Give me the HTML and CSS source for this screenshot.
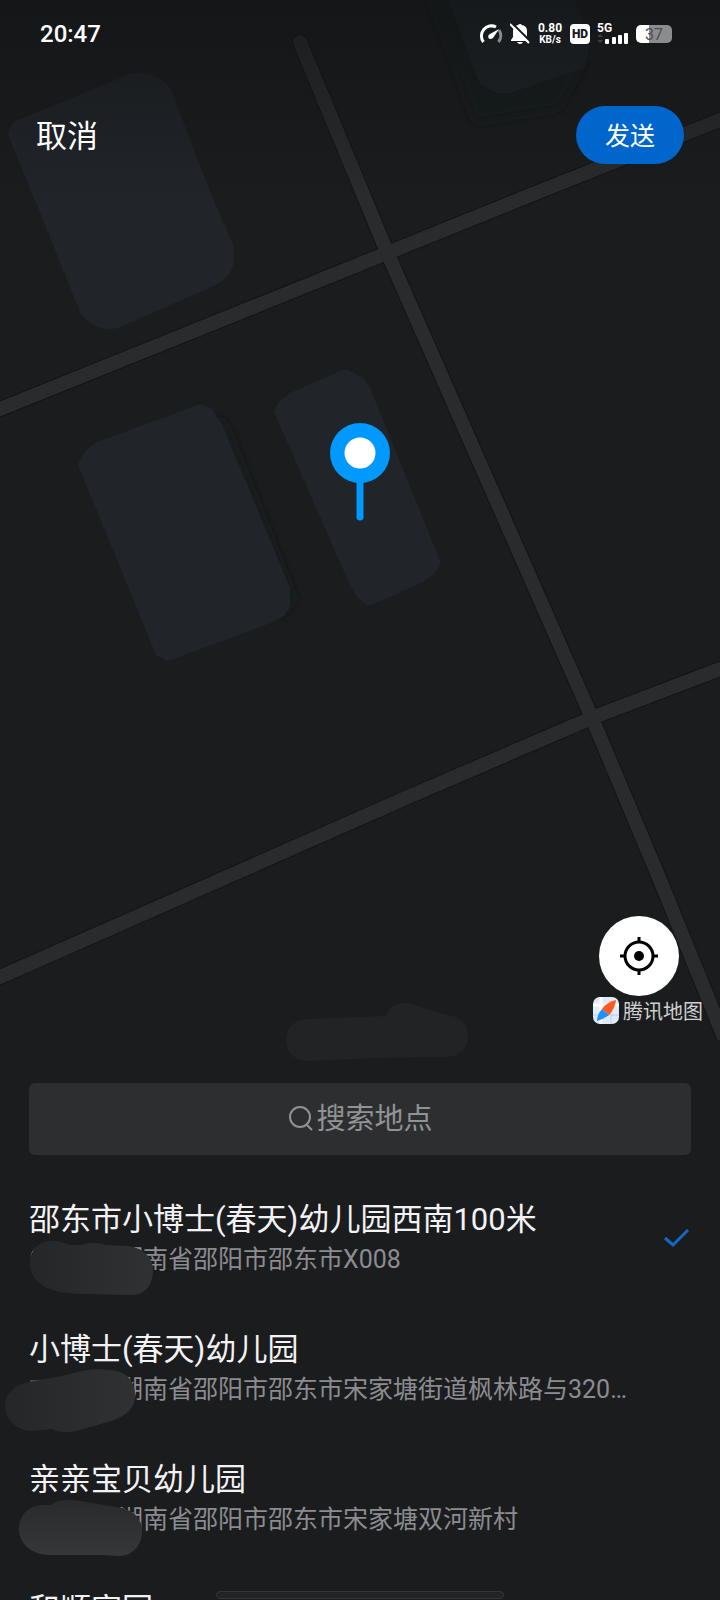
FILE: index.html
```html
<!DOCTYPE html>
<html lang="zh-CN">
<head>
    <meta charset="UTF-8">
    <meta name="viewport" content="width=device-width, initial-scale=1.0">
    <title>发送位置</title>
    <link rel="stylesheet" href="styles.css">
</head>
<body>

    <!-- Map -->
    <section class="map">
        <svg class="map-canvas" viewBox="0 0 720 1040" preserveAspectRatio="xMidYMin slice" aria-hidden="true">
            <defs>
                <filter id="soft" x="-30%" y="-30%" width="160%" height="160%"><feGaussianBlur stdDeviation="5"/></filter>
            </defs>
            <g class="shade" filter="url(#soft)">
                <path d="M430 0L475 122L560 108L585 60L560 0Z"/>
                <path d="M215 415L226 424L295 600L280 616Z"/>
            </g>
            <g class="building">
                <path d="M8 135Q11 120 20 119L28 116L130 74Q143 71 152 75Q165 80 171 90L213 199L234 247V263Q230 277 218 284L118 328Q106 331 96 326Q86 321 80 312L35 200Z"/>
                <path d="M78 465Q82 452 95 443L200 404L212 409L222 424L290 588V606L284 616L268 624L168 661L156 655Z"/>
                <path d="M274 412L279 402L290 393L343 370H348L363 378L370 388L441 563L435 573L423 582L372 605H366L357 597L350 585Z"/>
                <path class="dim" d="M448 0L478 80Q482 88 498 93L510 93L583 68Q590 58 589 40L575 0Z"/>
            </g>
            <g class="road-edge">
                <path d="M0 409L360 264L543 190L720 120"/>
                <path d="M0 977L408 797L594 717L720 669"/>
                <path d="M300 42L387 252L592 718L660 880L725 1040"/>
            </g>
            <g class="road">
                <path d="M0 409L360 264L543 190L720 120"/>
                <path d="M0 977L408 797L594 717L720 669"/>
                <path d="M300 42L387 252L592 718L660 880L725 1040"/>
            </g>
        </svg>

        <div class="map-top">
            <div class="status-bar">
                <time>20:47</time>
                <div class="status-icons">
                    <svg width="24" height="22" viewBox="0 0 24 22" fill="none" stroke-width="3">
                        <path stroke="#fff" d="M4.500 19A10 10 0 0 1 17 4"/>
                        <path stroke="#88898a" d="M20 7A10 10 0 0 1 19.500 19"/>
                        <path fill="#fff" d="M20 6L14 15Q11 17 9.500 15Q8.500 12 11 11Z"/>
                    </svg>
                    <svg width="20" height="22" viewBox="0 0 20 22">
                        <path fill="#fff" d="M3 8Q3 3 8 2Q10 0 12 2Q17 3 17 8V14L19 17V18H1V17L3 14ZM7 19H13Q12 21 10 21Q8 21 7 19Z"/>
                        <path stroke="#17191b" stroke-width="2" d="M2 0L21 19"/>
                        <path stroke="#fff" stroke-width="2" d="M0 1L19 20"/>
                    </svg>
                    <div class="speed"><b>0.80</b><small>KB/s</small></div>
                    <b class="hd">HD</b>
                    <div class="signal">
                        <b>5G</b>
                        <svg width="32" height="22" viewBox="0 0 32 22">
                            <path fill="#3c3d3f" d="M0 14L3 11L6 14ZM0 17L3 20L6 17Z"/>
                            <g fill="#fff"><rect x="8" y="16" width="4" height="5" rx="1"/><rect x="15" y="14" width="4" height="7" rx="1"/><rect x="21" y="12" width="4" height="9" rx="1"/><rect x="27" y="10" width="4" height="11" rx="1"/></g>
                        </svg>
                    </div>
                    <div class="battery">37</div>
                </div>
            </div>
            <div class="actions">
                <button class="cancel">取消</button>
                <button class="send">发送</button>
            </div>
        </div>

        <svg class="pin" viewBox="0 0 60 98" aria-hidden="true">
            <path stroke="#0099ff" stroke-width="7" stroke-linecap="round" d="M30 50V94"/>
            <circle cx="30" cy="30" r="30" fill="#0099ff"/>
            <circle cx="30" cy="30" r="15.500" fill="#fff"/>
        </svg>

        <button class="locate" aria-label="定位">
            <svg width="40" height="40" viewBox="0 0 40 40" fill="none" stroke="#000" stroke-width="3">
                <circle cx="20" cy="20" r="14"/>
                <path d="M20 1V7M20 33V39M1 20H7M33 20H39"/>
                <circle cx="20" cy="20" r="5" fill="#000" stroke="none"/>
            </svg>
        </button>
        <div class="brand">
            <svg width="26" height="27" viewBox="0 0 26 27">
                <rect width="26" height="27" rx="7" fill="#dfeafa"/>
                <path stroke="#fff" stroke-width="3" d="M0 8H26M8 0V27"/>
                <path stroke="#b5cdf3" d="M0 18H26M18 14V27"/>
                <path fill="#ff5a1f" d="M23 3Q14 5 9 12L16 18Q22 12 23 3Z"/>
                <path fill="#2091ff" d="M9 12L16 18Q11 22 4 24Q4 17 9 12Z"/>
            </svg>
            <span>腾讯地图</span>
        </div>
    </section>

    <!-- Place list -->
    <main class="sheet">
        <svg class="handle" width="190" height="64" viewBox="0 0 190 64" aria-hidden="true">
            <path d="M5 40C5 28 13 20 25 19L105 16C108 7 114 3 123 3C130 3 136 5 142 8L167 15C180 17 187 25 187 36C187 48 179 56 167 57L93 58L27 61C14 61 5 52 5 40Z"/>
        </svg>

        <label class="search">
            <svg width="25" height="26" viewBox="0 0 25 26" fill="none" stroke="#919294" stroke-width="2">
                <circle cx="12" cy="11" r="10"/>
                <path d="M18 18L24 24"/>
            </svg>
            <input type="text" placeholder="搜索地点" aria-label="搜索地点">
        </label>

        <ul class="places">
            <li class="place">
                <div class="info">
                    <h3>邵东市小博士(春天)幼儿园西南100米</h3>
                    <p>湖南省邵阳市邵东市X008</p>
                </div>
                <svg class="check" width="26" height="20" viewBox="0 0 26 20" fill="none" stroke="#1268c3" stroke-width="3">
                    <path d="M1 10L9 17L24 2"/>
                </svg>
                <svg class="smudge" width="160" height="130" viewBox="0 0 160 130" aria-hidden="true">
                    <defs>
                        <linearGradient id="fade"><stop offset="0" stop-color="#252628"/><stop offset="1" stop-color="#303133"/></linearGradient>
                        <linearGradient id="fade-down" x2="0" y2="1"><stop offset="0" stop-color="#292a2c"/><stop offset="1" stop-color="#363739"/></linearGradient>
                    </defs>
                    <path class="trace" d="M31 83Q32 77 36 75"/>
                    <path fill="url(#fade)" d="M30 90C30 77 39 68 51 68C58 67 63 70 70 72L82 72C89 69 97 69 105 72L125 73C143 74 153 84 153 97C153 112 145 122 131 122L87 121C73 121 60 120 50 116C38 112 30 103 30 90Z"/>
                </svg>
            </li>
            <li class="place">
                <div class="info">
                    <h3>小博士(春天)幼儿园</h3>
                    <p>湖南省邵阳市邵东市宋家塘街道枫林路与320国道交叉口</p>
                </div>
                <svg class="smudge" width="160" height="130" viewBox="0 0 160 130" aria-hidden="true">
                    <path class="trace" d="M30 78H43"/>
                    <path fill="url(#fade)" d="M5 103C5 90 16 81 30 79L57 74L82 68C93 66 102 66 110 67C126 68 135 78 135 91C135 106 126 113 111 118L80 127C70 130 60 130 52 126L33 128C17 128 5 117 5 103Z"/>
                </svg>
            </li>
            <li class="place">
                <div class="info">
                    <h3>亲亲宝贝幼儿园</h3>
                    <p>湖南省邵阳市邵东市宋家塘双河新村</p>
                </div>
                <svg class="smudge" width="160" height="130" viewBox="0 0 160 130" aria-hidden="true">
                    <path fill="url(#fade-down)" d="M19 96C19 82 29 72 43 72H51C56 68 62 67 69 67C77 67 87 69 97 71L123 75C135 79 142 86 142 98C142 113 132 123 118 123L103 122H50C32 122 19 111 19 96Z"/>
                </svg>
            </li>
            <li class="place">
                <div class="info">
                    <h3>和顺家园</h3>
                </div>
            </li>
        </ul>
    </main>

    <div class="home-bar"></div>

</body>
</html>
```
FILE: styles.css
```css
* {
    box-sizing: border-box;
    font-family: Roboto, 'Noto Sans CJK SC', sans-serif;
}
body {
    margin: 0;
    height: 100vh;
    display: flex;
    flex-direction: column;
    position: relative;
    overflow: hidden;
    background: #1b1c1e;
    color: #fff;
}
svg {
    display: block;
    flex: none;
}
button {
    border: none;
    padding: 0;
    cursor: pointer;
    color: white;
}

/* map */
.map {
    position: relative;
    flex: none;
    height: 65vh;
    display: flex;
    flex-direction: column;
    overflow: hidden;
}
.map-canvas {
    position: absolute;
    inset: 0;
    width: 100%;
    height: 100%;
}
.building {
    fill: #212429;
}
.building .dim {
    fill: #1f2428;
}
.shade {
    fill: #191b1e;
}
.road, .road-edge {
    fill: none;
    stroke: #2a2b2d;
    stroke-width: 14;
    stroke-linecap: round;
}
.road-edge {
    stroke: #131415;
    stroke-width: 16;
}
.map-top {
    position: relative;
    height: 200px;
    background: linear-gradient(rgba(16, 18, 19, 0.6), rgba(16, 18, 19, 0));
}
.status-bar {
    display: flex;
    justify-content: space-between;
    align-items: center;
    height: 67px;
    padding: 0 48px 0 40px;
}
.status-bar time {
    font-size: 24px;
    font-weight: 500;
}
.status-icons {
    display: flex;
    align-items: center;
    gap: 7px;
}
.speed {
    display: flex;
    flex-direction: column;
    align-items: center;
    width: 26px;
    font-size: 12px;
    line-height: 11px;
}
.speed small {
    font-size: 10px;
    font-weight: 700;
    line-height: 11px;
}
.hd {
    width: 20px;
    height: 20px;
    border-radius: 4px;
    background: white;
    color: #17191b;
    font-size: 12px;
    font-weight: 900;
    line-height: 20px;
    text-align: center;
}
.signal {
    position: relative;
}
.signal b {
    position: absolute;
    left: 0;
    top: 0;
    font-size: 12px;
    line-height: 10px;
}
.battery {
    width: 36px;
    height: 18px;
    border-radius: 5px;
    background: linear-gradient(90deg, #fff 36%, #8b8c8d 36%);
    color: #4d4e50;
    font-size: 16px;
    line-height: 19px;
    text-align: center;
}
.actions {
    display: flex;
    justify-content: space-between;
    align-items: center;
    padding: 39px 36px 0;
}
.cancel {
    padding-bottom: 4px;
    background: none;
    font-size: 31px;
}
.send {
    width: 108px;
    height: 58px;
    padding-bottom: 2px;
    border-radius: 29px;
    background: #0066cc;
    font-size: 25px;
}
.pin {
    position: absolute;
    left: 50%;
    top: 423px;
    width: 60px;
    height: 98px;
    transform: translateX(-50%);
}
.locate {
    position: relative;
    display: flex;
    align-items: center;
    justify-content: center;
    align-self: flex-end;
    width: 80px;
    height: 80px;
    margin: auto 41px 0 0;
    border-radius: 50%;
    background: white;
}
.brand {
    position: relative;
    display: flex;
    align-items: center;
    align-self: flex-end;
    gap: 4px;
    height: 28px;
    margin: 0 17px 16px 0;
    color: #d0d0d0;
    font-size: 20px;
}

/* list */
.sheet {
    position: relative;
    flex: 1;
    min-height: 0;
    padding-top: 43px;
    overflow: visible;
}
.handle {
    position: absolute;
    left: 39%;
    top: -40px;
    fill: #222325;
}
.search {
    display: flex;
    align-items: center;
    justify-content: center;
    gap: 4px;
    height: 72px;
    margin: 0 29px 18px;
    border-radius: 6px;
    background: #2d2e30;
}
.search input {
    width: 4em;
    padding: 0;
    border: none;
    outline: none;
    background: none;
    color: white;
    font-size: 29px;
}
.search input::placeholder {
    color: #919294;
}
.places {
    margin: 0;
    padding: 0;
    list-style: none;
}
.place {
    position: relative;
    display: flex;
    align-items: center;
    height: 130px;
    padding: 26px 29px;
}
.info {
    flex: 1;
    min-width: 0;
    align-self: flex-start;
    padding-right: 56px;
}
.info h3, .info p {
    margin: 0;
    overflow: hidden;
    white-space: nowrap;
    text-overflow: ellipsis;
}
.info h3 {
    color: #f2f2f5;
    font-size: 31px;
    font-weight: 400;
    line-height: 42px;
}
.info p {
    padding-left: 89px;
    color: #8c8c90;
    font-size: 25px;
    line-height: 38px;
}
.check {
    margin-right: 1px;
}
.smudge {
    position: absolute;
    left: 0;
    top: 0;
}
.trace {
    fill: none;
    stroke: #77787b;
}
.home-bar {
    position: absolute;
    left: 50%;
    bottom: 1px;
    width: 40%;
    height: 8px;
    transform: translateX(-50%);
    border: 1px solid #343537;
    border-radius: 4px;
    background: #232426;
}
```
